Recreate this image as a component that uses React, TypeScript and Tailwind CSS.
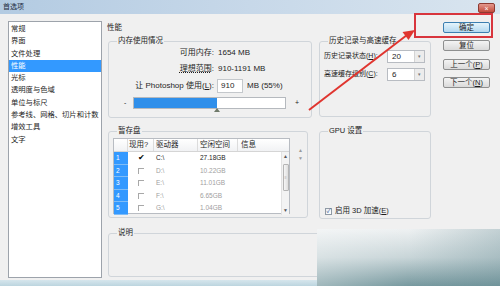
const items = ['常规', '界面', '文件处理', '性能', '光标', '透明度与色域', '单位与标尺', '参考线、网格、切片和计数', '增效工具', '文字'];

const drives = [
  { n: 1, on: true, d: 'C:\\', s: '27.18GB' },
  { n: 2, on: false, d: 'D:\\', s: '10.22GB' },
  { n: 3, on: false, d: 'E:\\', s: '11.01GB' },
  { n: 4, on: false, d: 'F:\\', s: '6.65GB' },
  { n: 5, on: false, d: 'G:\\', s: '1.04GB' },
];

function Btn({ children, main }: { children: React.ReactNode; main?: boolean }) {
  return (
    <div
      className={`h-[11px] flex items-center justify-center rounded-[2px] border text-[7.5px] leading-none ${
        main
          ? 'border-[#3c7fb1] bg-gradient-to-b from-[#e5f4fc] to-[#b3d8ef]'
          : 'border-[#8e8f8f] bg-gradient-to-b from-[#f4f4f4] to-[#dadada]'
      }`}
    >
      {children}
    </div>
  );
}

function Combo({ value }: { value: string }) {
  return (
    <div className="w-[38px] h-[13px] flex bg-white border border-[#b8bcc2]">
      <span className="flex-1 pl-[4px] leading-[11px]">{value}</span>
      <span className="w-[10px] h-full bg-[#ececec] border-l border-[#d4d4d4] flex items-center justify-center text-[5px] text-[#777]">▾</span>
    </div>
  );
}

export default function App() {
  return (
    <div className="relative w-[500px] h-[286px] overflow-hidden bg-[#f0f0f0] text-[8px] text-[#1e1e1e] font-['Liberation_Sans','Noto_Sans_CJK_SC',sans-serif]">
      {/* title bar */}
      <div className="h-[14px] flex items-start bg-gradient-to-r from-[#b3cbe2] via-[#c7d8e9] to-[#d9e5ef]">
        <span className="pl-[3px] pt-[3px] text-[7px] leading-[8px] text-[#1b2b3d]">首选项</span>
        <div className="ml-auto mr-[5px] mt-[3px] w-[17px] h-[10px] rounded-[2px] border border-[#8d3a32] bg-gradient-to-b from-[#e3988e] to-[#c24a3c] flex items-center justify-center text-white text-[7px] leading-none">×</div>
      </div>

      <div className="h-[266px] flex items-start">
        {/* category list */}
        <div className="ml-[8px] mt-[7px] w-[94px] h-[257px] bg-white border border-[#9da3ab] pt-[1px]">
          {items.map((t) => (
            <div
              key={t}
              className={`h-[12.3px] leading-[12.3px] pl-[2px] text-[7.3px] whitespace-nowrap ${t === '性能' ? 'bg-[#3399ff] text-white' : ''}`}
            >
              {t}
            </div>
          ))}
        </div>

        {/* settings */}
        <div className="ml-[5px] mt-[7px] pt-[1px] w-[324px] flex flex-col">
          <div className="h-[11px] leading-[11px] text-[7.5px]">性能</div>

          <div className="mt-[3px] flex items-start">
            <fieldset className="ml-[1px] w-[204px] h-[82px] border border-[#d0d5da] rounded-[3px]">
              <legend className="ml-[8px] px-[1px] leading-[10px] text-[7.5px]">内存使用情况</legend>
              <div className="mt-[2px] h-[10px] flex leading-[10px]">
                <span className="w-[105px] text-right">可用内存:</span>
                <span className="ml-[4px]">1654 MB</span>
              </div>
              <div className="mt-[6px] h-[10px] flex leading-[10px]">
                <span className="w-[105px] text-right"><span className="underline decoration-dotted">理想范围</span>:</span>
                <span className="ml-[4px]">910-1191 MB</span>
              </div>
              <div className="mt-[5px] h-[14px] flex items-center">
                <span className="w-[105px] text-right whitespace-nowrap">让 Photoshop 使用(<span className="underline">L</span>):</span>
                <div className="ml-[3px] w-[26px] h-[14px] bg-white border border-[#c4c8cc] pl-[3px] leading-[12px]">910</div>
                <span className="ml-[4px]">MB (55%)</span>
              </div>
              <div className="mt-[4px] h-[12px] flex items-center">
                <span className="ml-[15px] w-[9px] text-[7px]">-</span>
                <div className="relative w-[153px] h-[12px] bg-white border border-[#b5b9be]">
                  <div className="w-[83px] h-full bg-[#2f8fea]" />
                  <div className="absolute left-[80px] top-[10px] w-0 h-0 border-l-[3px] border-r-[3px] border-b-[4px] border-l-transparent border-r-transparent border-b-[#6f7a6a]" />
                </div>
                <span className="ml-[9px] text-[7px]">+</span>
              </div>
            </fieldset>

            <fieldset className="ml-[7px] w-[112px] h-[81px] border border-[#d0d5da] rounded-[3px]">
              <legend className="ml-[8px] px-[1px] leading-[10px] text-[7.5px]">历史记录与高速缓存</legend>
              <div className="mt-[4px] h-[13px] flex items-center">
                <span className="pl-[4px] w-[67px] whitespace-nowrap text-[7px]">历史记录状态(<span className="underline">H</span>):</span>
                <Combo value="20" />
              </div>
              <div className="mt-[5px] h-[13px] flex items-center">
                <span className="pl-[4px] w-[67px] whitespace-nowrap text-[7px]">高速缓存级别(<span className="underline">C</span>):</span>
                <Combo value="6" />
              </div>
            </fieldset>
          </div>

          <div className="mt-[8px] flex items-start">
            <fieldset className="ml-[1px] w-[200px] h-[92px] border border-[#d0d5da] rounded-[3px]">
              <legend className="ml-[8px] px-[1px] leading-[10px] text-[7.5px]">暂存盘</legend>
              <div className="mt-[2px] ml-[4px] flex items-start">
                <div className="w-[177px] h-[76px] border border-[#b8bcc2] bg-white flex flex-col">
                  <div className="h-[13px] flex border-b border-[#d5d5d5] bg-gradient-to-b from-white to-[#f1f2f4] text-[7.5px] leading-[12px]">
                    <div className="w-[14px] border-r border-[#dcdcdc]" />
                    <div className="w-[26px] pl-[1px] border-r border-[#dcdcdc]">现用?</div>
                    <div className="w-[44px] pl-[2px] border-r border-[#dcdcdc]">驱动器</div>
                    <div className="w-[40px] pl-[2px] border-r border-[#dcdcdc]">空闲空间</div>
                    <div className="flex-1 pl-[3px]">信息</div>
                  </div>
                  <div className="flex flex-1">
                    <div className="flex-1 flex flex-col">
                      {drives.map((r) => (
                        <div key={r.n} className={`h-[12.5px] flex items-center text-[6.5px] ${r.on ? 'text-[#222]' : 'text-[#a0a0a0]'}`}>
                          <div className="w-[14px] h-full bg-[#3399ff] border-b border-[#7ebcf7] text-white pl-[2px] leading-[12px]">{r.n}</div>
                          <div className="w-[26px] flex justify-center">
                            {r.on ? (
                              <span className="text-[8px] leading-none text-black">✔</span>
                            ) : (
                              <span className="w-[6px] h-[6px] border-t border-l border-[#a8a8a8]" />
                            )}
                          </div>
                          <div className="w-[44px] pl-[2px]">{r.d}</div>
                          <div className="w-[40px] pl-[2px]">{r.s}</div>
                        </div>
                      ))}
                    </div>
                    <div className="w-[8px] bg-[#f3f3f3] border-l border-[#e2e2e2] flex flex-col items-center text-[5px] text-[#555] leading-none">
                      <span className="mt-[2px]">▲</span>
                      <div className="mt-[5px] w-[6px] h-[27px] rounded-[1px] border border-[#b5b5b5] bg-gradient-to-r from-[#f6f6f6] to-[#dedede] flex items-center justify-center text-[4px] text-[#888]">≡</div>
                      <span className="mt-auto mb-[2px]">▼</span>
                    </div>
                  </div>
                </div>
                <div className="ml-[8px] mt-[8px] flex flex-col text-[5px] leading-[8px] text-[#9a9a9a]">
                  <span>▲</span>
                  <span>▼</span>
                </div>
              </div>
            </fieldset>

            <fieldset className="ml-[11px] w-[112px] h-[93px] border border-[#d0d5da] rounded-[3px]">
              <legend className="ml-[8px] px-[1px] leading-[10px] text-[7.5px]">GPU 设置</legend>
              <div className="h-[81px] flex flex-col justify-end pb-[1px]">
                <div className="h-[10px] flex items-center pl-[5px]">
                  <div className="w-[7px] h-[7px] border border-[#8f9aa5] bg-gradient-to-br from-[#e8eef4] to-white flex items-center justify-center text-[6px] leading-none text-[#2a4f8f]">✓</div>
                  <span className="ml-[3px] text-[7.5px]">启用 3D 加速(<span className="underline">E</span>)</span>
                </div>
              </div>
            </fieldset>
          </div>

          <fieldset className="mt-[9px] ml-[1px] w-[323px] h-[49px] border border-[#d0d5da] rounded-[3px]">
            <legend className="ml-[8px] px-[1px] leading-[10px] text-[7.5px]">说明</legend>
          </fieldset>
        </div>

        {/* buttons */}
        <div className="ml-[12px] mt-[8px] w-[47px] flex flex-col">
          <Btn main>确定</Btn>
          <div className="mt-[7px]"><Btn>复位</Btn></div>
          <div className="mt-[8px]"><Btn>上一个(<span className="underline">P</span>)</Btn></div>
          <div className="mt-[7px]"><Btn>下一个(<span className="underline">N</span>)</Btn></div>
        </div>
      </div>

      <div className="h-[6px] bg-gradient-to-b from-[#d6e6ed] to-[#bcd5df]" />

      {/* blurred window edge over the lower right */}
      <div className="absolute left-[317px] top-[229px] w-[183px] h-[57px] bg-gradient-to-b from-[#eef1f2] via-[#c8d5d8] to-[#77999f]" />
      <div className="absolute left-[317px] top-[229px] w-[183px] h-[57px] bg-gradient-to-r from-white/30 via-transparent to-[#5f868e]/30" />

      {/* annotation */}
      <div className="absolute left-[414px] top-[13px] w-[79px] h-[25px] border-2 border-[#d8353d]" />
      <svg className="absolute left-0 top-0 pointer-events-none" width="500" height="286">
        <line x1="309" y1="110" x2="407" y2="35" stroke="#e0352f" strokeWidth="2" />
        <polygon points="415,30 408.5,40 402.5,32" fill="#e0352f" />
      </svg>
    </div>
  );
}
